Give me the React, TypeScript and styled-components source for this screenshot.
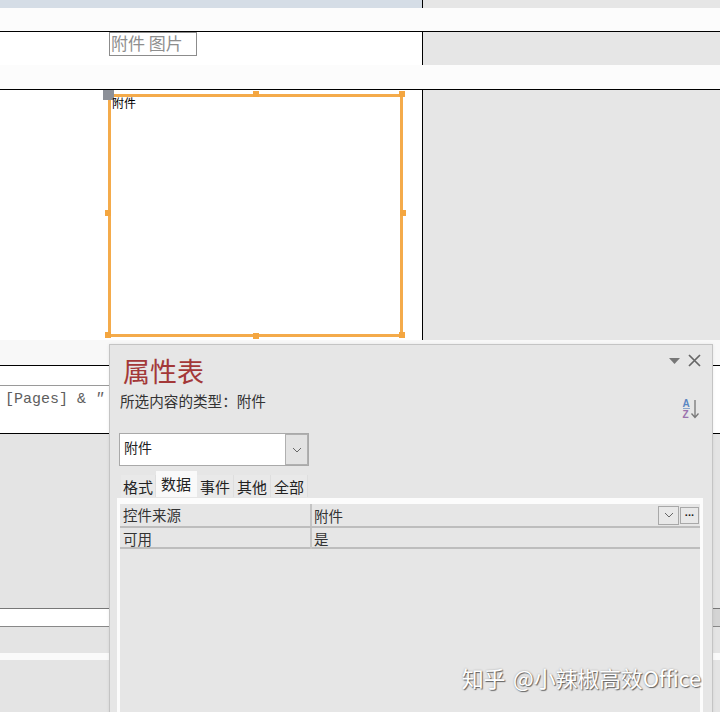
import styled, { createGlobalStyle } from "styled-components";

const GlobalStyle = createGlobalStyle`
  html, body {
    margin: 0;
    padding: 0;
  }
  body {
    font-family: "Noto Sans CJK SC", "Noto Sans", sans-serif;
    background: #e6e6e6;
  }
`;

const Screen = styled.div`
  position: relative;
  width: 720px;
  height: 712px;
  overflow: hidden;
  display: flex;
  flex-direction: column;
  background: #e6e6e6;
`;

// ---- design surface ----

const TopStrip = styled.div`
  display: flex;
  flex-shrink: 0;
  height: 8px;
`;

const StripCanvas = styled.div`
  width: 422px;
  background: #d5dde6;
  border-right: 1px solid #000;
`;

const Filler = styled.div<{ $bg?: string }>`
  flex: 1;
  background: ${(p) => p.$bg ?? "#e6e6e6"};
`;

const SectionBar = styled.div<{ $h: number; $bg?: string }>`
  flex-shrink: 0;
  height: ${(p) => p.$h}px;
  background: ${(p) => p.$bg ?? "#fcfcfc"};
`;

const Section = styled.div<{ $h: number }>`
  display: flex;
  flex-shrink: 0;
  height: ${(p) => p.$h}px;
  border-top: 1px solid #000;
`;

const DesignCanvas = styled.div`
  position: relative;
  width: 422px;
  background: #fff;
  border-right: 1px solid #000;
`;

const LabelControl = styled.div`
  position: absolute;
  left: 109px;
  top: 0;
  width: 88px;
  height: 24px;
  box-sizing: border-box;
  border: 1px solid #8c8c8c;
  padding-left: 1px;
  font-size: 17px;
  line-height: 20px;
  color: #8e8e8e;
  white-space: nowrap;
`;

const AttachmentFrame = styled.div`
  position: absolute;
  left: 108px;
  top: 4px;
  width: 295px;
  height: 243px;
  box-sizing: border-box;
  border: 3px solid #f4ab4b;
`;

const AttachmentCaption = styled.span`
  position: absolute;
  left: 1px;
  top: -1px;
  font-size: 12px;
  line-height: 14px;
  color: #000;
`;

const Handle = styled.span<{ $x: number; $y: number }>`
  position: absolute;
  left: ${(p) => p.$x}px;
  top: ${(p) => p.$y}px;
  width: 6px;
  height: 6px;
  background: #f4a640;
`;

const MoveHandle = styled.span`
  position: absolute;
  left: -8px;
  top: -7px;
  width: 11px;
  height: 10px;
  background: #8c9098;
`;

const FooterSection = styled.div`
  position: relative;
  flex-shrink: 0;
  height: 67px;
  border-top: 1px solid #000;
  background: #fff;
`;

const ExpressionBox = styled.div`
  position: absolute;
  left: -6px;
  top: 19px;
  width: 360px;
  height: 60px;
  border-top: 1px solid #9a9a9a;
  padding: 6px 0 0 11px;
  font-family: "Liberation Mono", "DejaVu Sans Mono", monospace;
  font-size: 15px;
  line-height: 16px;
  color: #5e5e5e;
  white-space: nowrap;
`;

const Quote = styled.span`
  font-style: italic;
`;

const BlankArea = styled.div<{ $h: number }>`
  flex-shrink: 0;
  height: ${(p) => p.$h}px;
  border-top: 1px solid #000;
  background: #e4e4e4;
`;

const WhiteRule = styled.div`
  display: flex;
  flex-shrink: 0;
  height: 17px;
  border-top: 1px solid #777;
  border-bottom: 1px solid #888;
  background: #fff;
`;

const RuleEdge = styled.div`
  margin-left: auto;
  width: 7px;
  background: #d4d4d4;
`;

const Rest = styled.div`
  flex: 1;
  background: #e4e4e4;
`;

// ---- property sheet ----

const PropertySheet = styled.aside`
  position: absolute;
  left: 109px;
  top: 344px;
  width: 604px;
  height: 380px;
  box-sizing: border-box;
  display: flex;
  flex-direction: column;
  padding: 0 9px 0 7px;
  background: #e6e6e6;
  border: 1px solid #c4c4c4;
  box-shadow: 0 0 3px rgba(0, 0, 0, 0.08);
`;

const SheetHeader = styled.header`
  display: flex;
  justify-content: space-between;
  align-items: flex-start;
  height: 44px;
`;

const SheetTitle = styled.h1`
  margin: 9px 0 0 6px;
  font-size: 27px;
  font-weight: 400;
  line-height: 34px;
  color: #a33838;
`;

const HeaderTools = styled.div`
  display: flex;
  align-items: center;
  gap: 8px;
  margin: 9px 2px 0 0;
`;

const TypeRow = styled.div`
  display: flex;
  justify-content: space-between;
  align-items: flex-start;
  height: 44px;
`;

const TypeLabel = styled.div`
  margin: 2px 0 0 3px;
  font-size: 14.6px;
  line-height: 20px;
  color: #333;
`;

const SortIcon = styled.svg`
  margin: 9px 3px 0 0;
`;

const Combo = styled.div`
  display: flex;
  width: 190px;
  height: 33px;
  box-sizing: border-box;
  margin-left: 2px;
  background: #fff;
  border: 1px solid #a9a9a9;
`;

const ComboText = styled.span`
  flex: 1;
  padding-left: 4px;
  font-size: 14px;
  line-height: 26px;
  color: #222;
`;

const ComboButton = styled.span`
  display: flex;
  align-items: center;
  justify-content: center;
  width: 21px;
  border: 1px solid #b0b0b0;
  background: #e3e3e3;
`;

const TabStrip = styled.div`
  display: flex;
  align-items: flex-end;
  height: 26px;
  margin: 5px 0 0 4px;
`;

const Tab = styled.div<{ $w: number; $active?: boolean }>`
  width: ${(p) => p.$w}px;
  height: ${(p) => (p.$active ? 26 : 22)}px;
  box-sizing: border-box;
  text-align: center;
  font-size: 15px;
  line-height: ${(p) => (p.$active ? 25 : 23)}px;
  color: #222;
  background: ${(p) => (p.$active ? "#f9f9f9" : "#e9e9e9")};
  border-right: 1px solid ${(p) => (p.$active ? "#f9f9f9" : "#dedede")};
`;

const PropGrid = styled.div`
  flex: 1;
  margin-top: 1px;
  background: #e6e6e6;
  border: 3px solid #fcfcfc;
  border-top-width: 6px;
`;

const PropRow = styled.div<{ $h: number }>`
  display: grid;
  grid-template-columns: 192px 1fr;
  height: ${(p) => p.$h}px;
  border-bottom: 2px solid #bdbdbd;
  font-size: 14.5px;
  color: #333;
`;

const PropName = styled.div`
  padding-left: 3px;
  border-right: 2px solid #c4c4c4;
  line-height: 21px;
`;

const PropValue = styled.div`
  display: flex;
  align-items: center;
  padding: 0 1px 0 2px;
`;

const ValueText = styled.span`
  flex: 1;
  line-height: 21px;
`;

const CellButton = styled.span<{ $w: number; $h: number }>`
  display: flex;
  align-items: center;
  justify-content: center;
  width: ${(p) => p.$w}px;
  height: ${(p) => p.$h}px;
  box-sizing: border-box;
  margin-left: 1px;
  border: 1px solid #a8a8a8;
  background: #e8e8e8;
  font-family: "Liberation Sans", sans-serif;
  font-size: 11px;
  font-weight: 700;
  letter-spacing: -0.5px;
  color: #222;
`;

const Watermark = styled.div`
  position: absolute;
  right: 19px;
  bottom: 21px;
  font-size: 22px;
  line-height: 28px;
  color: #fff;
  letter-spacing: -0.2px;
  word-spacing: 3px;
  text-shadow: 1px 1px 1px rgba(0, 0, 0, 0.55), 0 0 2px rgba(0, 0, 0, 0.3);
  white-space: nowrap;
`;

const Chevron = () => (
  <svg width="10" height="6" viewBox="0 0 10 6">
    <path d="M1 1 L5 5 L9 1" fill="none" stroke="#666" strokeWidth="1" />
  </svg>
);

const handles: Array<[number, number]> = [
  [142, -6],
  [288, -6],
  [-6, 113],
  [289, 113],
  [-6, 235],
  [142, 236],
  [288, 235],
];

const tabs = [
  { name: "格式", w: 35 },
  { name: "数据", w: 41, active: true },
  { name: "事件", w: 37 },
  { name: "其他", w: 37 },
  { name: "全部", w: 37 },
];

export default function App() {
  return (
    <Screen>
      <GlobalStyle />
      <TopStrip>
        <StripCanvas />
        <Filler />
      </TopStrip>
      <SectionBar $h={23} />
      <Section $h={33}>
        <DesignCanvas>
          <LabelControl>附件 图片</LabelControl>
        </DesignCanvas>
        <Filler />
      </Section>
      <SectionBar $h={24} />
      <Section $h={250}>
        <DesignCanvas>
          <AttachmentFrame>
            <MoveHandle />
            {handles.map(([x, y]) => (
              <Handle key={`${x}-${y}`} $x={x} $y={y} />
            ))}
            <AttachmentCaption>附件</AttachmentCaption>
          </AttachmentFrame>
        </DesignCanvas>
        <Filler />
      </Section>
      <SectionBar $h={25} $bg="#f8f8f8" />
      <FooterSection>
        <ExpressionBox>
          [Pages] &amp; <Quote>″</Quote>
        </ExpressionBox>
      </FooterSection>
      <BlankArea $h={174} />
      <WhiteRule>
        <RuleEdge />
      </WhiteRule>
      <SectionBar $h={26} $bg="#e4e4e4" />
      <SectionBar $h={7} $bg="#fafafa" />
      <Rest />

      <PropertySheet>
        <SheetHeader>
          <SheetTitle>属性表</SheetTitle>
          <HeaderTools>
            <svg width="11" height="6" viewBox="0 0 11 6">
              <path d="M0 0 H11 L5.5 6 Z" fill="#777" />
            </svg>
            <svg width="13" height="13" viewBox="0 0 13 13">
              <path d="M1 1 L12 12 M12 1 L1 12" stroke="#666" strokeWidth="1.7" />
            </svg>
          </HeaderTools>
        </SheetHeader>
        <TypeRow>
          <TypeLabel>所选内容的类型：附件</TypeLabel>
          <SortIcon width="18" height="21" viewBox="0 0 18 21">
            <text x="0.5" y="9" fontFamily="Liberation Sans, sans-serif" fontSize="10" fontWeight="700" fill="#5a86c2">
              A
            </text>
            <line x1="1" y1="10.5" x2="8" y2="10.5" stroke="#8aa6cc" strokeWidth="1" />
            <text x="0.5" y="20" fontFamily="Liberation Sans, sans-serif" fontSize="10" fontWeight="700" fill="#9a72ad">
              Z
            </text>
            <path d="M13 2 V19 M9.5 15.5 L13 19.5 L16.5 15.5" fill="none" stroke="#777" strokeWidth="1.3" />
          </SortIcon>
        </TypeRow>
        <Combo>
          <ComboText>附件</ComboText>
          <ComboButton>
            <Chevron />
          </ComboButton>
        </Combo>
        <TabStrip>
          {tabs.map((t) => (
            <Tab key={t.name} $w={t.w} $active={t.active}>
              {t.name}
            </Tab>
          ))}
        </TabStrip>
        <PropGrid>
          <PropRow $h={22}>
            <PropName>控件来源</PropName>
            <PropValue>
              <ValueText>附件</ValueText>
              <CellButton $w={21} $h={19}>
                <Chevron />
              </CellButton>
              <CellButton $w={19} $h={17}>
                ···
              </CellButton>
            </PropValue>
          </PropRow>
          <PropRow $h={19}>
            <PropName>可用</PropName>
            <PropValue>
              <ValueText>是</ValueText>
            </PropValue>
          </PropRow>
        </PropGrid>
      </PropertySheet>

      <Watermark>知乎 @小辣椒高效Office</Watermark>
    </Screen>
  );
}
